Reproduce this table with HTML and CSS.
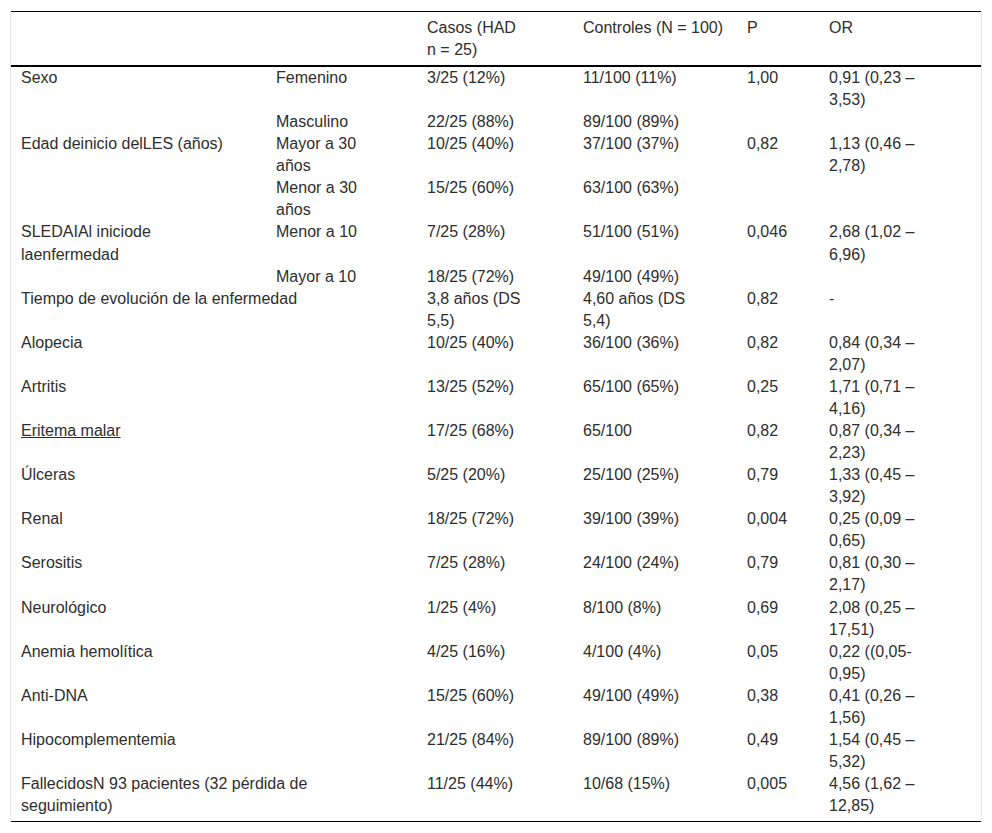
FILE: index.html
```html
<!DOCTYPE html>
<html lang="es">
<head>
<meta charset="utf-8">
<title>Tabla</title>
<link rel="stylesheet" href="styles.css">
</head>
<body>
<div class="wrap">
<table class="data">
<colgroup>
<col class="c1"><col class="c2"><col class="c3"><col class="c4"><col class="c5"><col class="c6">
</colgroup>
<thead>
<tr><th></th><th></th><th>Casos (HAD<br>n = 25)</th><th>Controles (N = 100)</th><th>P</th><th>OR</th></tr>
</thead>
<tbody>
<tr><td>Sexo</td><td>Femenino</td><td>3/25 (12%)</td><td>11/100 (11%)</td><td>1,00</td><td>0,91 (0,23 –<br>3,53)</td></tr>
<tr><td></td><td>Masculino</td><td>22/25 (88%)</td><td>89/100 (89%)</td><td></td><td></td></tr>
<tr><td>Edad deinicio delLES (años)</td><td>Mayor a 30<br>años</td><td>10/25 (40%)</td><td>37/100 (37%)</td><td>0,82</td><td>1,13 (0,46 –<br>2,78)</td></tr>
<tr><td></td><td>Menor a 30<br>años</td><td>15/25 (60%)</td><td>63/100 (63%)</td><td></td><td></td></tr>
<tr><td>SLEDAIAl iniciode<br>laenfermedad</td><td>Menor a 10</td><td>7/25 (28%)</td><td>51/100 (51%)</td><td>0,046</td><td>2,68 (1,02 –<br>6,96)</td></tr>
<tr><td></td><td>Mayor a 10</td><td>18/25 (72%)</td><td>49/100 (49%)</td><td></td><td></td></tr>
<tr><td colspan="2">Tiempo de evolución de la enfermedad</td><td>3,8 años (DS<br>5,5)</td><td>4,60 años (DS<br>5,4)</td><td>0,82</td><td>-</td></tr>
<tr><td colspan="2">Alopecia</td><td>10/25 (40%)</td><td>36/100 (36%)</td><td>0,82</td><td>0,84 (0,34 –<br>2,07)</td></tr>
<tr><td colspan="2">Artritis</td><td>13/25 (52%)</td><td>65/100 (65%)</td><td>0,25</td><td>1,71 (0,71 –<br>4,16)</td></tr>
<tr><td colspan="2"><span class="ul">Eritema malar</span></td><td>17/25 (68%)</td><td>65/100</td><td>0,82</td><td>0,87 (0,34 –<br>2,23)</td></tr>
<tr><td colspan="2">Úlceras</td><td>5/25 (20%)</td><td>25/100 (25%)</td><td>0,79</td><td>1,33 (0,45 –<br>3,92)</td></tr>
<tr><td colspan="2">Renal</td><td>18/25 (72%)</td><td>39/100 (39%)</td><td>0,004</td><td>0,25 (0,09 –<br>0,65)</td></tr>
<tr><td colspan="2">Serositis</td><td>7/25 (28%)</td><td>24/100 (24%)</td><td>0,79</td><td>0,81 (0,30 –<br>2,17)</td></tr>
<tr><td colspan="2">Neurológico</td><td>1/25 (4%)</td><td>8/100 (8%)</td><td>0,69</td><td>2,08 (0,25 –<br>17,51)</td></tr>
<tr><td colspan="2">Anemia hemolítica</td><td>4/25 (16%)</td><td>4/100 (4%)</td><td>0,05</td><td>0,22 ((0,05-<br>0,95)</td></tr>
<tr><td colspan="2">Anti-DNA</td><td>15/25 (60%)</td><td>49/100 (49%)</td><td>0,38</td><td>0,41 (0,26 –<br>1,56)</td></tr>
<tr><td colspan="2">Hipocomplementemia</td><td>21/25 (84%)</td><td>89/100 (89%)</td><td>0,49</td><td>1,54 (0,45 –<br>5,32)</td></tr>
<tr class="last"><td colspan="2">FallecidosN 93 pacientes (32 pérdida de<br>seguimiento)</td><td>11/25 (44%)</td><td>10/68 (15%)</td><td>0,005</td><td>4,56 (1,62 –<br>12,85)</td></tr>
</tbody>
</table>
</div>
</body>
</html>
```
FILE: styles.css
```css
html, body {
  margin: 0;
  padding: 0;
  background: #fff;
}
body {
  font-family: "Liberation Sans", Arial, sans-serif;
  font-size: 16px;
  line-height: 22.06px;
  color: #2e2e2e;
}
.wrap {
  margin: 11px 10px 0 10px;
  border-left: 1px solid #e6e6e6;
  border-right: 1px solid #e6e6e6;
  width: 970px;
}
.data {
  width: 970px;
  table-layout: fixed;
  border-collapse: collapse;
  border-top: 1px solid #000;
  border-bottom: 1px solid #000;
}
.c1 { width: 255px; }
.c2 { width: 151px; }
.c3 { width: 156px; }
.c4 { width: 164px; }
.c5 { width: 82px; }
.c6 { width: 162px; }
.data th,
.data td {
  padding: 0 0 0 10px;
  text-align: left;
  vertical-align: top;
  white-space: nowrap;
  font-weight: normal;
}
.data th {
  padding-top: 5px;
  padding-bottom: 4px;
  line-height: 22px;
  border-bottom: 2px solid #000;
}
.data tr.last td {
  padding-bottom: 4px;
}
.ul {
  text-decoration: underline;
}
```
